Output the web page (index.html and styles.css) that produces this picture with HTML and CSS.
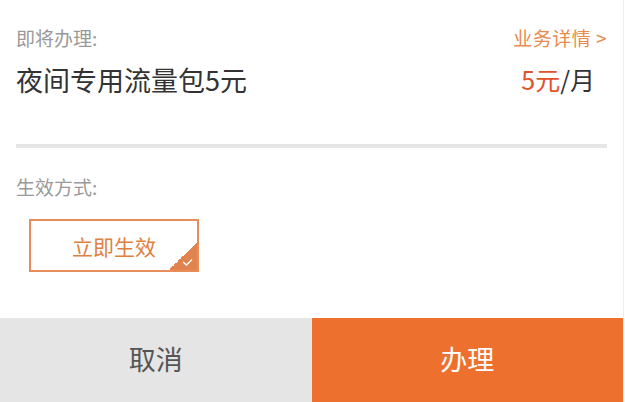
FILE: index.html
```html
<!DOCTYPE html>
<html>
<head>
    <meta charset="utf-8">
    <title>业务办理</title>
    <link rel="stylesheet" href="styles.css">
</head>
<body>
<div class="page">
    <div class="info">
        <div class="row">
            <span class="label">即将办理:</span>
            <a class="detail" href="javascript:;">业务详情 &gt;</a>
        </div>
        <div class="row row-main">
            <span class="name">夜间专用流量包5元</span>
            <span class="price"><em>5元</em>/月</span>
        </div>
    </div>

    <div class="line"></div>

    <div class="effect">
        <p class="label">生效方式:</p>
        <div class="options">
            <a class="option checked" href="javascript:;">
                立即生效
                <span class="corner">
                    <svg width="11" height="8" viewBox="0 0 11 8">
                        <path d="M1 4 L4.5 7 L10 1.5" fill="none" stroke="#fff" stroke-width="1.3"/>
                    </svg>
                </span>
            </a>
        </div>
    </div>

    <div class="footer">
        <a class="btn btn-cancel" href="javascript:;">取消</a>
        <a class="btn btn-ok" href="javascript:;">办理</a>
    </div>
</div>
</body>
</html>
```

FILE: styles.css
```css
html, body {
    overflow: hidden;
}

body, div, p {
    margin: 0;
    padding: 0;
}

body {
    background: #fff;
    color: #333;
    font-family: "Noto Sans CJK SC", "Noto Sans", sans-serif;
}

a {
    text-decoration: none;
}

em {
    font-style: normal;
}

.page {
    width: 623px;
    height: 402px;
    border-right: 1px solid #eee;
    display: flex;
    flex-direction: column;
}

.info {
    padding: 29px 16px 0;
}

.row {
    display: flex;
    justify-content: space-between;
    align-items: flex-start;
}

.label {
    color: #999;
    font-size: 19px;
    line-height: 18px;
}

.detail {
    color: #e98a4e;
    font-size: 19px;
    line-height: 18px;
    letter-spacing: 0.5px;
}

.row-main {
    margin-top: 20px;
}

.name {
    font-size: 27px;
    line-height: 26px;
    color: #333;
}

.price {
    font-size: 25px;
    line-height: 24px;
    margin-right: 12px;
    color: #333;
}

.price em {
    color: #e0522c;
}

.line {
    height: 4px;
    margin: 51px 16px 0;
    background: #e6e6e6;
}

.effect {
    padding: 30px 16px 0;
}

.options {
    padding: 23px 0 0 13px;
}

.option {
    position: relative;
    display: flex;
    align-items: center;
    justify-content: center;
    width: 166px;
    height: 49px;
    border: 2px solid #e68d5a;
    color: #e0803f;
    font-size: 21px;
}

.corner {
    position: absolute;
    right: 0;
    bottom: 0;
    width: 28px;
    height: 28px;
    background: linear-gradient(to bottom right, transparent 50%, #e0834f 50%);
}

.corner svg {
    position: absolute;
    right: 4px;
    bottom: 4px;
}

.footer {
    margin-top: auto;
    height: 84px;
    display: flex;
}

.btn {
    flex: 1;
    display: flex;
    align-items: center;
    justify-content: center;
    padding-bottom: 3px;
    font-size: 27px;
}

.btn-cancel {
    background: #e5e5e5;
    color: #555;
}

.btn-ok {
    background: #ee702e;
    color: #fff;
}
```
